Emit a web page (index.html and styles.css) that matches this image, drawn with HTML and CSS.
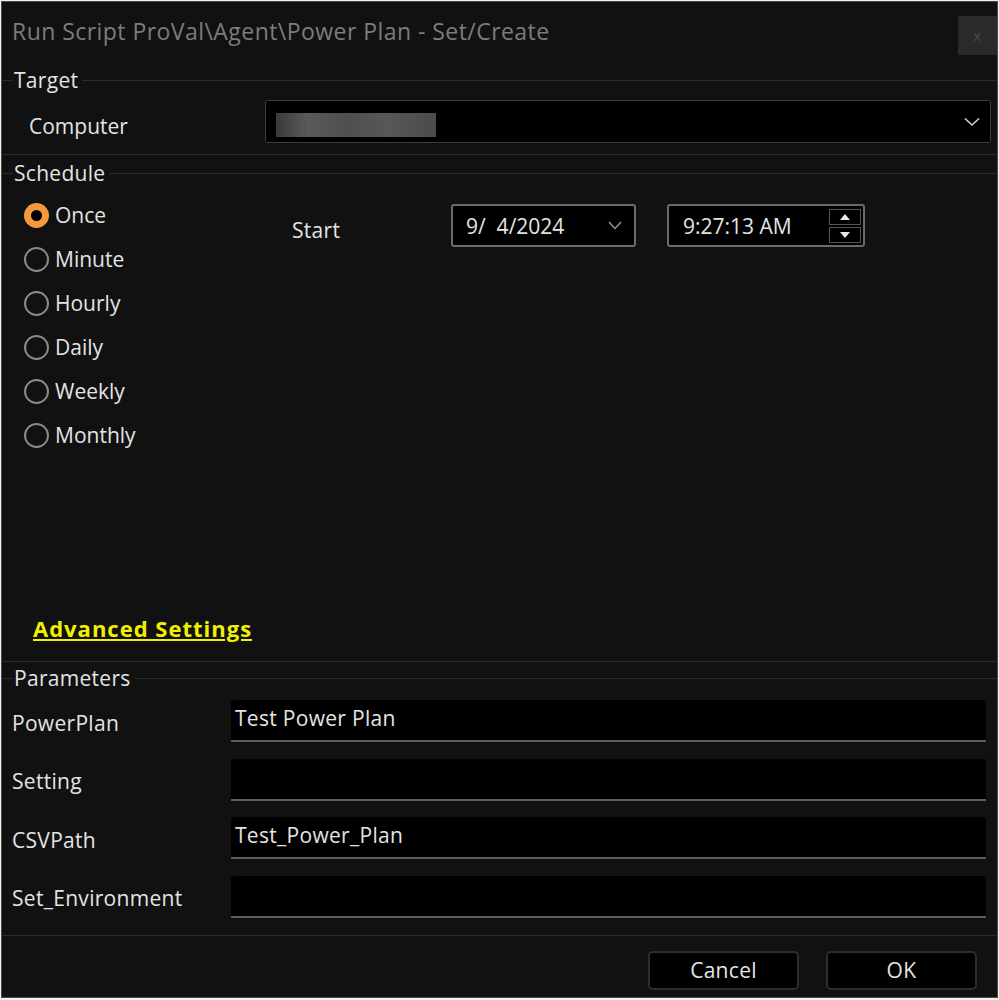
FILE: index.html
```html
<!DOCTYPE html>
<html lang="en">

<head>
    <meta charset="UTF-8">
    <title>Run Script</title>
    <link rel="stylesheet" href="styles.css">
</head>

<body>

    <div class="window">
        <!-- Title bar -->
        <div class="titlebar">
            <span class="title">Run Script ProVal\Agent\Power Plan - Set/Create</span>
            <div class="close-btn">x</div>
        </div>

        <!-- Target -->
        <div class="group-head"><span>Target</span></div>
        <div class="target-row">
            <label class="target-label">Computer</label>
            <div class="combo">
                <div class="blurred"></div>
                <svg class="chevron" width="16" height="10" viewBox="0 0 16 10">
                    <path d="M1 1.5 L8 8 L15 1.5" fill="none" stroke="#d0d0d0" stroke-width="1.6" />
                </svg>
            </div>
        </div>
        <div class="group-end"></div>

        <!-- Schedule -->
        <div class="group-head schedule-head"><span>Schedule</span></div>
        <div class="schedule">
            <div class="radios">
                <div class="radio checked"><span class="dot"></span>Once</div>
                <div class="radio"><span class="dot"></span>Minute</div>
                <div class="radio"><span class="dot"></span>Hourly</div>
                <div class="radio"><span class="dot"></span>Daily</div>
                <div class="radio"><span class="dot"></span>Weekly</div>
                <div class="radio"><span class="dot"></span>Monthly</div>
            </div>
            <div class="start-row">
                <span class="start-label">Start</span>
                <div class="picker date">
                    <span>9/&nbsp; 4/2024</span>
                    <svg width="14" height="9" viewBox="0 0 14 9">
                        <path d="M1 1 L7 7.5 L13 1" fill="none" stroke="#9a9a9a" stroke-width="1.3" />
                    </svg>
                </div>
                <div class="picker time">
                    <span>9:27:13 AM</span>
                    <div class="spin">
                        <div class="spin-btn">
                            <svg width="10" height="6" viewBox="0 0 10 6"><path d="M0 6 L5 0 L10 6 Z" fill="#e8e8e8" /></svg>
                        </div>
                        <div class="spin-btn">
                            <svg width="10" height="6" viewBox="0 0 10 6"><path d="M0 0 L5 6 L10 0 Z" fill="#e8e8e8" /></svg>
                        </div>
                    </div>
                </div>
            </div>
        </div>
        <a class="advanced" href="#">Advanced Settings</a>
        <div class="group-end"></div>

        <!-- Parameters -->
        <div class="group-head params-head"><span>Parameters</span></div>
        <div class="params">
            <div class="param-row">
                <label>PowerPlan</label>
                <div class="param-input">Test Power Plan</div>
            </div>
            <div class="param-row">
                <label>Setting</label>
                <div class="param-input"></div>
            </div>
            <div class="param-row">
                <label>CSVPath</label>
                <div class="param-input">Test_Power_Plan</div>
            </div>
            <div class="param-row">
                <label>Set_Environment</label>
                <div class="param-input"></div>
            </div>
        </div>
        <div class="group-end footer-line"></div>

        <!-- Buttons -->
        <div class="footer">
            <button type="button">Cancel</button>
            <button type="button">OK</button>
        </div>
    </div>

</body>

</html>
```

FILE: styles.css
```css
body {
    margin: 0;
    background-color: #f2f2f2;
    font-family: "Open Sans", "Noto Sans", sans-serif;
    color: #e4e4e4;
    letter-spacing: 0.3px;
}

.window {
    box-sizing: border-box;
    width: 997px;
    height: 997px;
    margin: 1px 0 0 1px;
    border: 1px solid #4a4a4a;
    background-color: #111111;
    overflow: hidden;
}

/* Title bar */
.titlebar {
    height: 58px;
    display: flex;
    justify-content: space-between;
}

.title {
    color: #7c7c7c;
    font-size: 23px;
    padding: 13px 0 0 10px;
    letter-spacing: 0.45px;
}

.close-btn {
    width: 39px;
    height: 39px;
    margin-top: 14px;
    background-color: #2a2a2a;
    color: #4a4a4a;
    font-size: 14px;
    display: flex;
    align-items: center;
    justify-content: center;
}

/* Group headings with line */
.group-head {
    display: flex;
    align-items: center;
    height: 20px;
    margin-top: 10px;
    font-size: 21px;
}

.group-head::before {
    content: "";
    width: 11px;
    height: 1px;
    background-color: #2c2c2c;
}

.group-head::after {
    content: "";
    flex: 1;
    height: 1px;
    background-color: #2c2c2c;
    margin-left: 4px;
}

.group-head span {
    padding-left: 1px;
}

.group-end {
    height: 1px;
    background-color: #2c2c2c;
}

/* Target */
.target-row {
    display: flex;
    align-items: center;
    margin: 10px 6px 11px 0;
}

.target-label {
    width: 236px;
    padding: 8px 0 0 27px;
    font-size: 21px;
    letter-spacing: 0;
}

.combo {
    flex: 1;
    height: 41px;
    background-color: #000;
    border: 1px solid #3c3c3c;
    border-radius: 3px;
    display: flex;
    align-items: center;
    justify-content: space-between;
    padding-right: 10px;
}

.blurred {
    width: 160px;
    height: 24px;
    margin-left: 10px;
    margin-top: 7px;
    background: linear-gradient(90deg, #3a3a3a, #5a5a5a 20%, #4e4e4e 45%, #585858 70%, #4a4a4a);
}

/* Schedule */
.schedule-head {
    margin-top: 8px;
}

.schedule {
    display: flex;
    margin-top: 10px;
    height: 264px;
}

.radios {
    width: 268px;
    padding-left: 22px;
}

.radio {
    height: 44px;
    display: flex;
    align-items: center;
    font-size: 21px;
    letter-spacing: 0;
}

.radio .dot {
    box-sizing: border-box;
    width: 25px;
    height: 25px;
    border: 2px solid #8a8a8a;
    border-radius: 50%;
    margin-right: 6px;
}

.radio.checked .dot {
    border: 7px solid #f39a3c;
    background-color: #000;
}

.start-row {
    display: flex;
    align-items: flex-start;
    padding-top: 11px;
}

.start-label {
    width: 159px;
    font-size: 21px;
    padding-top: 12px;
}

.picker {
    box-sizing: border-box;
    height: 43px;
    background-color: #000;
    border: 2px solid #6a6a6a;
    border-radius: 3px;
    display: flex;
    align-items: center;
    justify-content: space-between;
    font-size: 21px;
    letter-spacing: 0;
}

.picker.date {
    width: 185px;
    padding: 0 12px 0 13px;
}

.picker.time {
    width: 198px;
    margin-left: 31px;
    padding: 0 2px 0 14px;
}

.spin {
    display: flex;
    flex-direction: column;
    gap: 2px;
}

.spin-btn {
    width: 30px;
    height: 14px;
    border: 1px solid #555;
    display: flex;
    align-items: center;
    justify-content: center;
}

.advanced {
    display: block;
    margin: 156px 0 18px 31px;
    width: max-content;
    color: #f0f000;
    font-size: 22px;
    font-weight: bold;
    text-decoration: underline;
    letter-spacing: 1px;
}

/* Parameters */
.params-head {
    margin-top: 6px;
}

.params {
    padding: 12px 11px 17px 10px;
}

.param-row {
    display: flex;
    align-items: center;
    height: 42px;
    margin-bottom: 16.5px;
}

.param-row:last-child {
    margin-bottom: 0;
}

.param-row label {
    width: 219px;
    font-size: 21px;
    padding-top: 3px;
}

.param-input {
    box-sizing: border-box;
    flex: 1;
    height: 42px;
    background-color: #000;
    border-bottom: 2px solid #5c5c5c;
    border-radius: 3px 3px 0 0;
    padding: 4px 4px 0;
    font-size: 21px;
}

/* Footer */
.footer {
    display: flex;
    justify-content: flex-end;
    gap: 27px;
    padding: 15px 20px 0 0;
}

button {
    width: 151px;
    height: 39px;
    background-color: #000;
    border: 2px solid #2e2e2e;
    border-radius: 5px;
    color: #e4e4e4;
    font-family: "Open Sans", "Noto Sans", sans-serif;
    font-size: 21px;
    letter-spacing: 0.3px;
}
```
